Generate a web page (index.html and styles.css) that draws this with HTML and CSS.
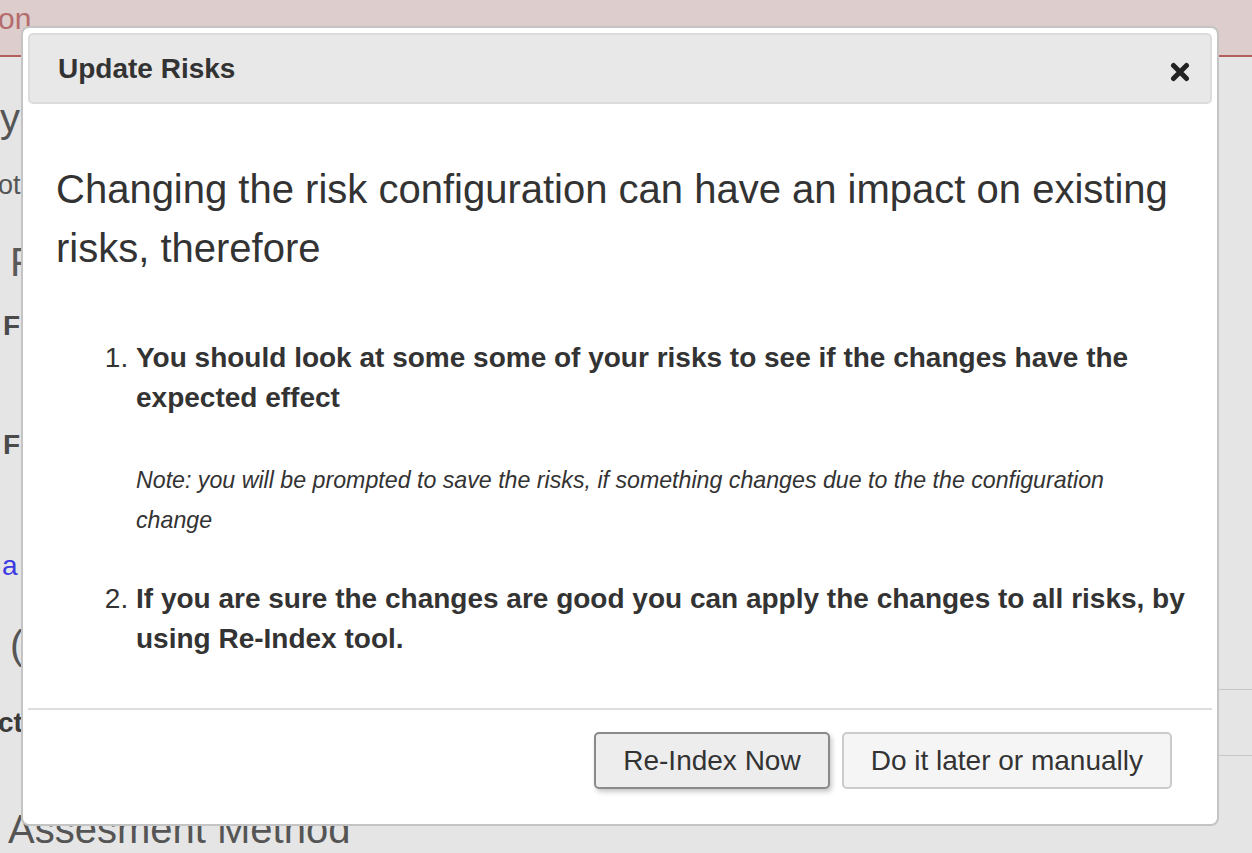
FILE: index.html
```html
<!DOCTYPE html>
<html lang="en">
<head>
<meta charset="utf-8">
<title>Update Risks</title>
<link rel="stylesheet" href="styles.css">
</head>
<body>
<div class="page">
  <div class="banner"><span class="banner-text">on</span></div>
  <div class="row r-y">y</div>
  <div class="row r-ot">ot</div>
  <div class="row r-f1">F</div>
  <div class="row r-f2">F</div>
  <div class="row r-f3">F</div>
  <div class="row r-a">a</div>
  <div class="row r-paren">(</div>
  <div class="table-row">
    <div class="cell-label">ct</div>
    <div class="cell-value"></div>
  </div>
  <div class="row r-method">Assesment Method</div>
</div>

<div class="modal">
  <div class="modal-header">
    <h4 class="modal-title">Update Risks</h4>
    <button class="close" type="button" aria-label="Close">
      <svg width="20" height="20" viewBox="0 0 20 20" aria-hidden="true">
        <path d="M3.5 3.5 L16.5 16.5 M16.5 3.5 L3.5 16.5" stroke="#222" stroke-width="5" stroke-linecap="round" fill="none"/>
      </svg>
    </button>
  </div>
  <div class="modal-body">
    <h2 class="lead-title">Changing the risk configuration can have an impact on existing risks, therefore</h2>
    <ol class="steps">
      <li>
        <span class="step-text">You should look at some some of your risks to see if the changes have the expected effect</span>
        <p class="note">Note: you will be prompted to save the risks, if something changes due to the the configuration change</p>
      </li>
      <li>
        <span class="step-text">If you are sure the changes are good you can apply the changes to all risks, by using Re-Index tool.</span>
      </li>
    </ol>
  </div>
  <div class="modal-footer">
    <button class="btn btn-primary" type="button">Re-Index Now</button>
    <button class="btn btn-default" type="button">Do it later or manually</button>
  </div>
</div>
</body>
</html>
```

FILE: styles.css
```css
* { box-sizing: border-box; }

html, body {
  margin: 0;
  padding: 0;
  height: 100%;
  overflow: hidden;
}

body {
  background: #e5e5e5;
  font-family: "Liberation Sans", Arial, sans-serif;
  color: #333;
}

/* ---------- background page (dimmed) ---------- */
.page {
  width: 100%;
}

.banner {
  height: 57px;
  background: #ddcdcd;
  border-bottom: 2px solid #b45e5e;
  font-size: 30px;
  line-height: 38px;
  color: #b46c6c;
  white-space: nowrap;
}

.banner-text {
  display: inline-block;
  margin-left: -2px;
}

.row {
  white-space: nowrap;
  color: #555;
}

.r-y {
  margin-top: 41px;
  height: 40px;
  line-height: 40px;
  font-size: 40px;
}

.r-ot {
  margin-top: 32px;
  height: 30px;
  line-height: 30px;
  font-size: 27px;
  margin-left: -2px;
}

.r-f1 {
  margin-top: 42px;
  height: 40px;
  line-height: 40px;
  font-size: 40px;
  padding-left: 10px;
  color: #5a5a5a;
}

.r-f2,
.r-f3 {
  height: 30px;
  line-height: 30px;
  font-size: 28px;
  font-weight: bold;
  padding-left: 3px;
  color: #4a4a4a;
}

.r-f2 { margin-top: 29px; }
.r-f3 { margin-top: 89px; }

.r-a {
  margin-top: 91px;
  height: 30px;
  line-height: 30px;
  font-size: 28px;
  padding-left: 2px;
  color: #3c3ce0;
}

.r-paren {
  margin-top: 44px;
  height: 40px;
  line-height: 40px;
  font-size: 40px;
  padding-left: 10px;
}

.table-row {
  margin-top: 24px;
  height: 67px;
  display: flex;
}

.cell-label {
  width: 300px;
  padding-top: 1px;
  line-height: 65px;
  font-size: 28px;
  font-weight: bold;
  color: #3a3a3a;
  margin-left: -2px;
  white-space: nowrap;
}

.cell-value {
  flex: 1;
  border-top: 1px solid #c6c6c6;
  border-bottom: 1px solid #c6c6c6;
}

.r-method {
  margin-top: 48px;
  height: 50px;
  line-height: 50px;
  font-size: 40px;
  padding-left: 8px;
}

/* ---------- modal (overlays the page) ---------- */
.modal {
  position: fixed;
  left: 21px;
  top: 26px;
  width: 1198px;
  background: #fff;
  border: 2px solid #c4c4c4;
  border-radius: 8px;
  padding: 5px;
}

.modal-header {
  height: 71px;
  background: #e8e8e8;
  border: 2px solid #dcdcdc;
  border-radius: 5px;
  display: flex;
  align-items: center;
  justify-content: space-between;
  padding: 0 20px 0 28px;
}

.modal-title {
  margin: 0;
  font-size: 28px;
  font-weight: bold;
  color: #333;
  line-height: 1;
}

.close {
  border: 0;
  background: transparent;
  padding: 0;
  margin: 6px 0 0 0;
  width: 20px;
  height: 20px;
  display: flex;
}

.modal-body {
  padding: 0 20px 0 28px;
}

.lead-title {
  margin: 56px 0 0 0;
  font-size: 40px;
  font-weight: normal;
  line-height: 59px;
  color: #333;
}

.steps {
  margin: 60px 0 49px 0;
  padding-left: 80px;
  font-size: 28px;
  line-height: 40px;
}

.step-text {
  font-weight: bold;
}

.note {
  margin: 42px 40px 39px 0;
  font-size: 23.2px;
  font-style: italic;
  line-height: 40px;
  color: #333;
}

.modal-footer {
  border-top: 2px solid #dddddd;
  padding: 22px 40px 30px 0;
  display: flex;
  justify-content: flex-end;
  gap: 12px;
}

.btn {
  height: 57px;
  padding: 0 27px;
  font-family: "Liberation Sans", Arial, sans-serif;
  font-size: 28px;
  color: #333;
  border-radius: 5px;
  border: 2px solid #ccc;
  cursor: pointer;
}

.btn-primary {
  background: #ededed;
  border-color: #8a8a8a;
  box-shadow: 2px 3px 5px rgba(0, 0, 0, 0.22);
}

.btn-default {
  background: #f5f5f5;
  border-color: #cbcbcb;
}
```
